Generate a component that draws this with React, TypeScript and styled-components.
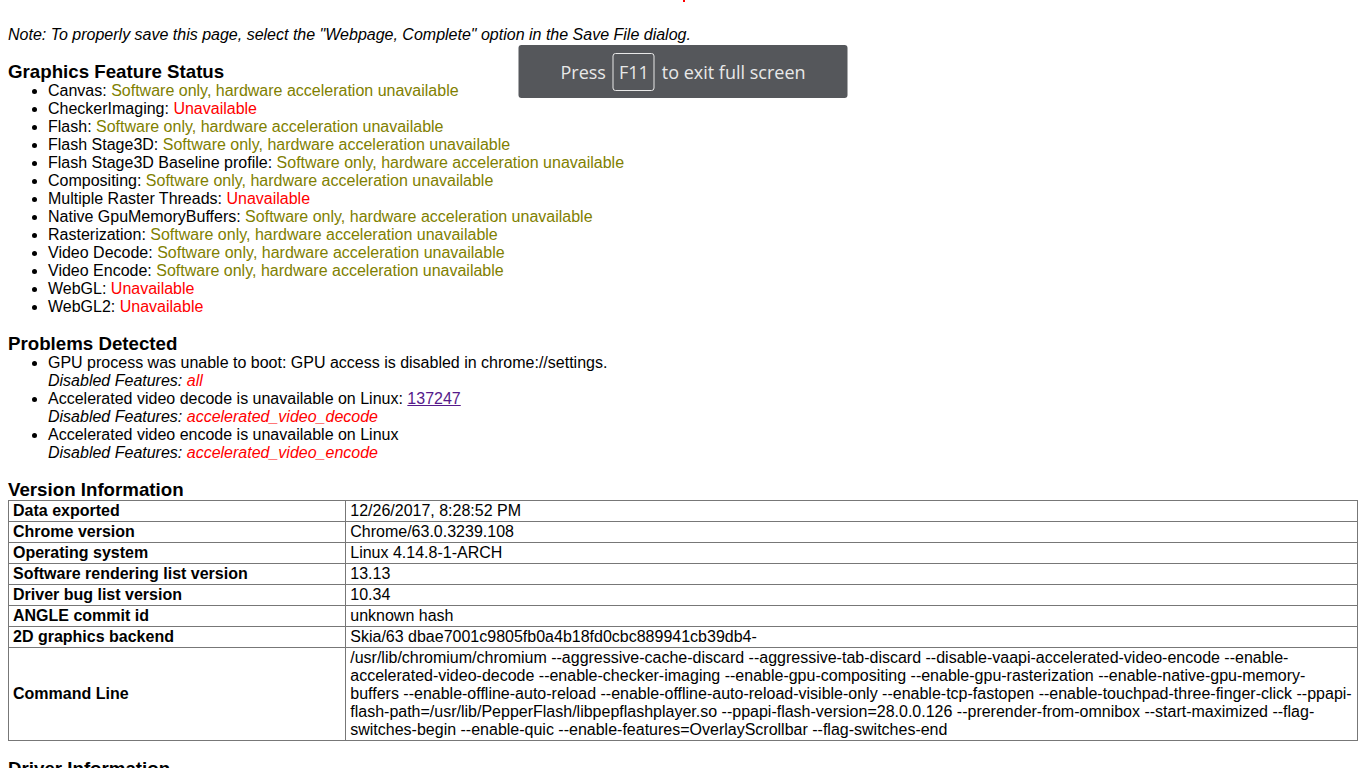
import React from "react";
import styled, { createGlobalStyle } from "styled-components";

const Global = createGlobalStyle`
  html, body { margin: 0; padding: 0; background: #fff; }
  body { font-family: "Liberation Sans", Arial, sans-serif; font-size: 16px; color: #000; }
`;

const Page = styled.div`
  padding: 0 8px 40px 8px;
  position: relative;
`;

const TopMark = styled.div`
  height: 2px;
  display: flex;
  justify-content: center;
  padding-left: 1px;
  & > span { width: 2px; height: 2px; background: #f00; }
`;

const Note = styled.div`
  margin-top: 24px;
  font-style: italic;
  line-height: 18px;
`;

const Heading = styled.h3`
  margin: 17px 0 0 0;
  font-size: 18.72px;
  font-weight: bold;
  line-height: 21px;
`;

const List = styled.ul`
  margin: 0;
  padding-left: 40px;
  line-height: 18px;
`;

const Item = styled.li``;

const Status = styled.span<{ $bad?: boolean }>`
  color: ${(p) => (p.$bad ? "#ff0000" : "#808000")};
`;

const Disabled = styled.div`
  font-style: italic;
`;

const DisabledValue = styled.span`
  color: #ff0000;
`;

const Link = styled.a`
  color: #551a8b;
  text-decoration: underline;
`;

const Table = styled.table`
  width: 100%;
  border-collapse: collapse;
  border: 1px solid #777;
  line-height: 18px;
`;

const Cell = styled.td<{ $head?: boolean }>`
  border: 1px solid #777;
  padding: 1px 4px;
  vertical-align: middle;
  font-weight: ${(p) => (p.$head ? "bold" : "normal")};
  width: ${(p) => (p.$head ? "25%" : "auto")};
`;

const Toast = styled.div`
  position: absolute;
  top: 45px;
  left: 50%;
  transform: translateX(-50%);
  width: 329px;
  height: 53px;
  box-sizing: border-box;
  background: #55575b;
  border-radius: 3px;
  display: flex;
  align-items: center;
  justify-content: center;
  gap: 7px;
  color: #e8e8e8;
  font-family: "Open Sans", "Noto Sans", sans-serif;
  font-size: 18px;
`;

const Key = styled.span`
  border: 1px solid #e8e8e8;
  border-radius: 3px;
  padding: 0 5px;
  height: 38px;
  display: inline-flex;
  align-items: center;
  box-sizing: border-box;
`;

const SW = "Software only, hardware acceleration unavailable";

const features: [string, string, boolean][] = [
  ["Canvas", SW, false],
  ["CheckerImaging", "Unavailable", true],
  ["Flash", SW, false],
  ["Flash Stage3D", SW, false],
  ["Flash Stage3D Baseline profile", SW, false],
  ["Compositing", SW, false],
  ["Multiple Raster Threads", "Unavailable", true],
  ["Native GpuMemoryBuffers", SW, false],
  ["Rasterization", SW, false],
  ["Video Decode", SW, false],
  ["Video Encode", SW, false],
  ["WebGL", "Unavailable", true],
  ["WebGL2", "Unavailable", true],
];

const versions: [string, string][] = [
  ["Data exported", "12/26/2017, 8:28:52 PM"],
  ["Chrome version", "Chrome/63.0.3239.108"],
  ["Operating system", "Linux 4.14.8-1-ARCH"],
  ["Software rendering list version", "13.13"],
  ["Driver bug list version", "10.34"],
  ["ANGLE commit id", "unknown hash"],
  ["2D graphics backend", "Skia/63 dbae7001c9805fb0a4b18fd0cbc889941cb39db4-"],
  [
    "Command Line",
    "/usr/lib/chromium/chromium --aggressive-cache-discard --aggressive-tab-discard --disable-vaapi-accelerated-video-encode --enable-accelerated-video-decode --enable-checker-imaging --enable-gpu-compositing --enable-gpu-rasterization --enable-native-gpu-memory-buffers --enable-offline-auto-reload --enable-offline-auto-reload-visible-only --enable-tcp-fastopen --enable-touchpad-three-finger-click --ppapi-flash-path=/usr/lib/PepperFlash/libpepflashplayer.so --ppapi-flash-version=28.0.0.126 --prerender-from-omnibox --start-maximized --flag-switches-begin --enable-quic --enable-features=OverlayScrollbar --flag-switches-end",
  ],
];

export default function App() {
  return (
    <Page>
      <Global />
      <TopMark>
        <span />
      </TopMark>
      <Note>Note: To properly save this page, select the "Webpage, Complete" option in the Save File dialog.</Note>

      <Heading>Graphics Feature Status</Heading>
      <List>
        {features.map(([name, val, bad]) => (
          <Item key={name}>
            {name}: <Status $bad={bad}>{val}</Status>
          </Item>
        ))}
      </List>

      <Heading>Problems Detected</Heading>
      <List>
        <Item>
          GPU process was unable to boot: GPU access is disabled in chrome://settings.
          <Disabled>
            Disabled Features: <DisabledValue>all</DisabledValue>
          </Disabled>
        </Item>
        <Item>
          Accelerated video decode is unavailable on Linux: <Link href="#">137247</Link>
          <Disabled>
            Disabled Features: <DisabledValue>accelerated_video_decode</DisabledValue>
          </Disabled>
        </Item>
        <Item>
          Accelerated video encode is unavailable on Linux
          <Disabled>
            Disabled Features: <DisabledValue>accelerated_video_encode</DisabledValue>
          </Disabled>
        </Item>
      </List>

      <Heading>Version Information</Heading>
      <Table>
        <tbody>
          {versions.map(([k, v]) => (
            <tr key={k}>
              <Cell $head>{k}</Cell>
              <Cell>{v}</Cell>
            </tr>
          ))}
        </tbody>
      </Table>

      <Heading>Driver Information</Heading>

      <Toast>
        <span>Press</span>
        <Key>F11</Key>
        <span>to exit full screen</span>
      </Toast>
    </Page>
  );
}
